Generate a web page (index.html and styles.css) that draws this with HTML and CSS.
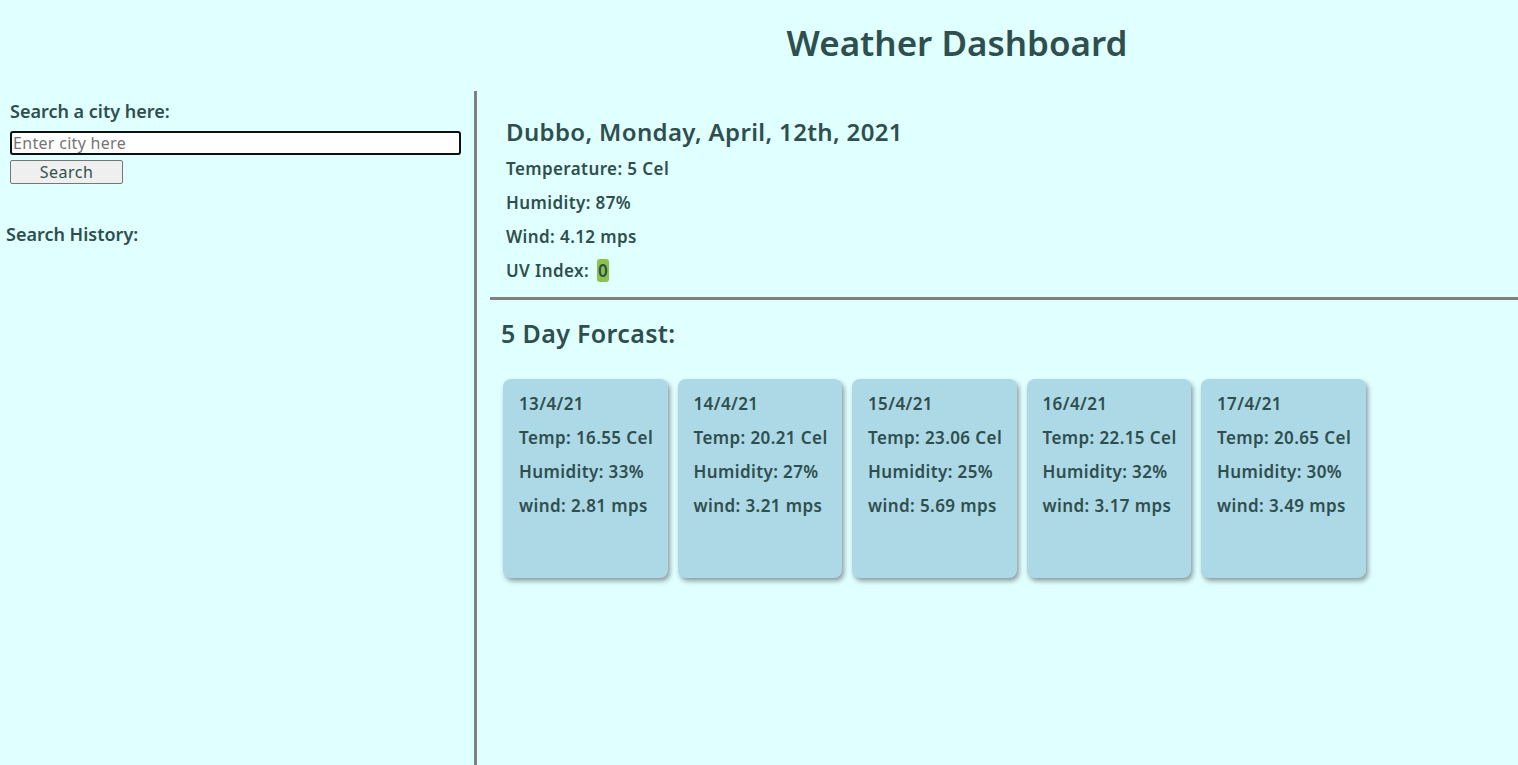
FILE: index.html
```html
<!DOCTYPE html>
<html lang="en">
<head>
<meta charset="utf-8">
<title>Weather Dashboard</title>
<link rel="stylesheet" href="styles.css">
</head>
<body>
<header class="top">
  <h1 class="title">Weather Dashboard</h1>
</header>
<main class="layout">
  <aside class="sidebar">
    <label class="search-label" for="city">Search a city here:</label>
    <input class="city-input" id="city" type="text" placeholder="Enter city here">
    <button class="search-btn" type="button">Search</button>
    <h3 class="history-title">Search History:</h3>
  </aside>
  <section class="content">
    <div class="current">
      <h2 class="current-title">Dubbo, Monday, April, 12th, 2021</h2>
      <p class="stat">Temperature: 5 Cel</p>
      <p class="stat">Humidity: 87%</p>
      <p class="stat">Wind: 4.12 mps</p>
      <p class="stat">UV Index: <span class="uv">0</span></p>
    </div>
    <h2 class="forecast-title">5 Day Forcast:</h2>
    <div class="cards">
      <div class="card"><p>13/4/21</p><p>Temp: 16.55 Cel</p><p>Humidity: 33%</p><p>wind: 2.81 mps</p></div>
      <div class="card"><p>14/4/21</p><p>Temp: 20.21 Cel</p><p>Humidity: 27%</p><p>wind: 3.21 mps</p></div>
      <div class="card"><p>15/4/21</p><p>Temp: 23.06 Cel</p><p>Humidity: 25%</p><p>wind: 5.69 mps</p></div>
      <div class="card"><p>16/4/21</p><p>Temp: 22.15 Cel</p><p>Humidity: 32%</p><p>wind: 3.17 mps</p></div>
      <div class="card"><p>17/4/21</p><p>Temp: 20.65 Cel</p><p>Humidity: 30%</p><p>wind: 3.49 mps</p></div>
    </div>
  </section>
</main>
</body>
</html>
```
FILE: styles.css
```css
* { box-sizing: border-box; }
html, body { height: 100%; }
body {
  margin: 0;
  background: #e0ffff;
  color: #2f4f4f;
  font-family: "Noto Sans", "DejaVu Sans", sans-serif;
  font-weight: 600;
  display: flex;
  flex-direction: column;
}
.top {
  height: 91px;
  padding-left: 396px;
  text-align: center;
}
.title {
  margin: 0;
  padding-top: 21px;
  font-size: 35px;
  line-height: 44px;
  font-weight: 600;
}
.layout {
  flex: 1;
  display: flex;
}
.sidebar {
  width: 477px;
  border-right: 3px solid #808080;
  padding: 10px 0 0 10px;
  display: flex;
  flex-direction: column;
  align-items: flex-start;
}
.search-label {
  font-size: 18px;
  line-height: 20px;
  margin-bottom: 10px;
}
.city-input {
  width: 451px;
  height: 24px;
  border: 2px solid #101010;
  border-radius: 3px;
  background: #fff;
  padding: 0 1px;
  font-family: inherit;
  font-weight: 400;
  font-size: 16px;
  letter-spacing: 0.3px;
  color: #2f4f4f;
  outline: none;
}
.city-input::placeholder { color: #757575; }
.search-btn {
  margin-top: 5px;
  width: 113px;
  height: 24px;
  background: #efefef;
  border: 1px solid #767676;
  border-radius: 2px;
  font-family: inherit;
  font-weight: 400;
  font-size: 16px;
  letter-spacing: 0.5px;
  color: #2f4f4f;
  padding: 0;
}
.history-title {
  margin: 40px 0 0 -4px;
  font-size: 18px;
  line-height: 20px;
  font-weight: 600;
}
.content {
  flex: 1;
  padding-left: 13px;
}
.current {
  padding: 26px 0 16px 16px;
  border-bottom: 3px solid #808080;
}
.current-title {
  margin: 0 0 12px;
  font-size: 24px;
  letter-spacing: 0.35px;
  line-height: 30px;
  font-weight: 600;
}
.stat {
  margin: 0 0 14px;
  font-size: 17px;
  letter-spacing: 0.4px;
  line-height: 20px;
}
.stat:last-child { margin-bottom: 0; }
.uv {
  margin-left: 3px;
  background: #8bc34a;
  border-radius: 3px;
  padding: 0 1px;
}
.forecast-title {
  margin: 18px 0 31px 11px;
  font-size: 25px;
  letter-spacing: 0.35px;
  line-height: 30px;
  font-weight: 600;
}
.cards {
  display: flex;
  gap: 10px;
  margin-left: 13px;
}
.card {
  width: 164.5px;
  height: 199px;
  background: #add8e6;
  border-radius: 8px;
  box-shadow: 2px 3px 5px #8a9a9e;
  padding: 15px 0 0 16px;
}
.card p {
  margin: 0 0 14px;
  font-size: 17px;
  letter-spacing: 0.4px;
  line-height: 20px;
}
```
